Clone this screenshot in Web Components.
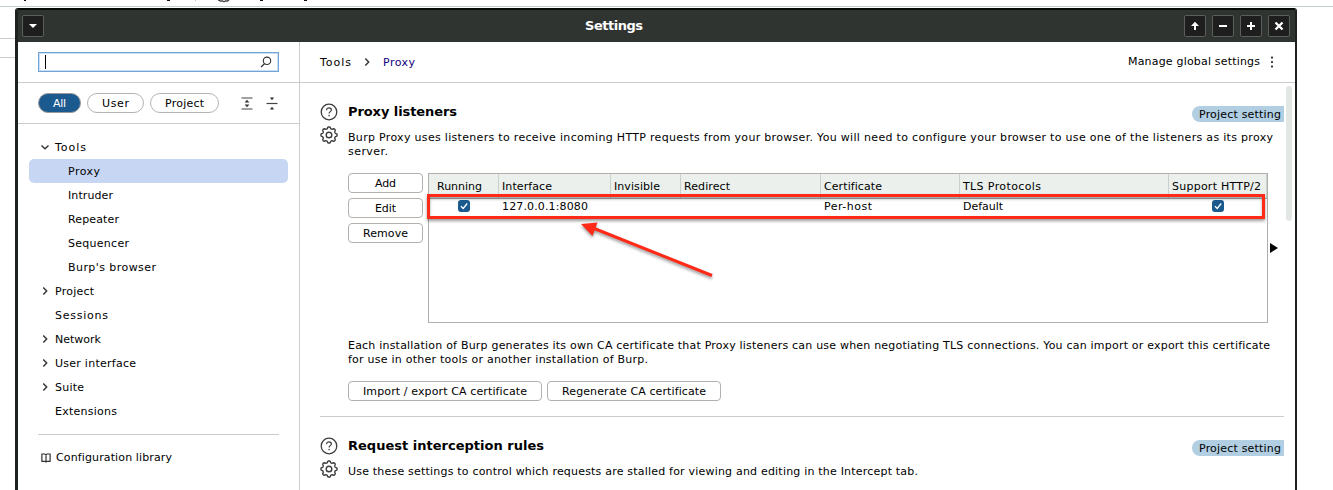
<!DOCTYPE html>
<html lang="en">
<head>
<meta charset="utf-8">
<title>Settings</title>
<style>
html,body{margin:0;height:490px;overflow:hidden;background:#fff}
body{font:11px/14px "DejaVu Sans",sans-serif;color:#000}
</style>
</head>
<body>
<burp-desktop></burp-desktop>
<script>
const define=(name,html,init)=>{
  const t=document.createElement('template');t.innerHTML=html;
  customElements.define(name,class extends HTMLElement{
    constructor(){super();this.attachShadow({mode:'open'}).appendChild(t.content.cloneNode(true));}
    connectedCallback(){if(init)init.call(this,this.shadowRoot);}
  });
};

/* One line of text spread over a fixed advance width. */
define('ui-text','<style>:host{display:block;white-space:nowrap;flex:none;height:14px}span{display:inline-block;font-variant-ligatures:none}</style><span><slot></slot></span>',function(r){
  const w=parseFloat(this.getAttribute('w'));
  const s=r.querySelector('span');
  const n=this.textContent.length;
  this.style.width=w+'px';
  s.style.letterSpacing=((w-s.getBoundingClientRect().width)/(n-1))+'px';
});

/* Outline of an eight-lobed cog. */
const cog=Array.from({length:96},(_,i)=>{
  const a=i*Math.PI/48,k=7.25+.85*Math.tanh(2*Math.cos(8*a));
  return (9+k*Math.cos(a)).toFixed(2)+' '+(9+k*Math.sin(a)).toFixed(2);
}).join('L');

const icons={
  down:['0 0 10 10','<path d="M1.5 3.5 5 6.8 8.5 3.5" fill="none" stroke="#333" stroke-width="1.4"/>'],
  right:['0 0 10 10','<path d="M3.3 1.5 6.7 5 3.3 8.5" fill="none" stroke="#333" stroke-width="1.4"/>'],
  help:['0 0 18 18','<circle cx="9" cy="9" r="7.8" fill="none" stroke="#3c3f3d" stroke-width="1.3"/><path d="M6.6 7.2C6.6 5.7 7.6 4.8 9 4.8s2.4.9 2.4 2.2c0 1.6-2.3 1.7-2.3 3.4" fill="none" stroke="#3c3f3d" stroke-width="1.2"/><circle cx="9.1" cy="12.6" r=".8" fill="#3c3f3d"/>'],
  gear:['0 0 18 18',`<path d="M${cog}z" fill="none" stroke="#3c3f3d" stroke-width="1.400" stroke-linejoin="round"/><circle cx="9" cy="9" r="2.800" fill="none" stroke="#3c3f3d" stroke-width="1.400"/>`],
  search:['0 0 12 12','<circle cx="7" cy="4.8" r="3.7" fill="none" stroke="#333" stroke-width="1.1"/><path d="M4.5 7.7 1 11" stroke="#333" stroke-width="1.2"/>'],
  expand:['0 0 12 13','<path d="M.5 1h11M.5 12h11" stroke="#444" stroke-width="1.2"/><path d="M6 2.8 8.4 5.6H3.6zM6 10.2 3.6 7.4h4.8z" fill="#333"/>'],
  collapse:['0 0 12 13','<path d="M.5 6.5h11" stroke="#444" stroke-width="1.2"/><path d="M6 3.2 3.8.6h4.4zM6 9.8l2.2 2.6H3.8z" fill="#333"/>'],
  book:['0 0 10 10','<path d="M.9 1h2.900L5 1.700 6.200 1h2.900v7.300H6L5 9 4 8.300H.9zM5 1.700V9" fill="none" stroke="#333" stroke-width="1.2"/>'],
  dots:['0 0 4 12','<rect x="1" y=".5" width="2" height="2" rx=".6" fill="#333"/><rect x="1" y="5" width="2" height="2" rx=".6" fill="#333"/><rect x="1" y="9.500" width="2" height="2" rx=".6" fill="#333"/>'],
  menu:['0 0 10 10','<path d="M1 3h8L5 7z" fill="#fff"/>'],
  up:['0 0 10 10','<path d="M5 .8 9 5H6v4H4V5H1z" fill="#fff"/>'],
  minus:['0 0 10 10','<path d="M1 4h8v2H1z" fill="#fff"/>'],
  plus:['0 0 10 10','<path d="M4 1h2v3h3v2H6v3H4V6H1V4h3z" fill="#fff"/>'],
  close:['0 0 10 10','<path d="M1.500 1.500l7 7M8.500 1.500l-7 7" stroke="#fff" stroke-width="2.300"/>'],
  play:['0 0 8 10','<path d="M0 0 8 5 0 10z"/>']
};
define('ui-icon','<style>:host{display:block;flex:none}svg{display:block;overflow:visible}</style><div></div>',function(r){
  const v=icons[this.getAttribute('name')][0],p=icons[this.getAttribute('name')][1];
  const b=v.split(' ');
  r.querySelector('div').innerHTML=`<svg width="${b[2]}" height="${b[3]}" viewBox="${v}">${p}</svg>`;
});
define('window-button','<style>:host{display:flex;box-sizing:border-box;width:22px;height:22px;border:1px solid #5c5e5d;border-radius:2px;background:#1d1e1d;align-items:center;justify-content:center}</style><slot></slot>');
define('ui-button','<style>:host{box-sizing:border-box;height:20px;padding-top:2px;display:flex;justify-content:center;align-items:center;border:1px solid #b5b0ab;border-radius:4px;background:#fff}</style><slot></slot>');
define('filter-pill','<style>:host{box-sizing:border-box;height:20px;padding-top:2px;display:flex;justify-content:center;align-items:center;border:1px solid #b3b3b3;border-radius:10px}:host([active]){background:#1b5a8f;color:#fff;border-color:#9a9a9a}</style><slot></slot>');
define('check-box','<style>:host{display:block;width:12px;height:12px;border-radius:3px;background:#1b5a8f}svg{display:block}</style><svg width="12" height="12"><path d="M3 6.300 5.200 8.500 9.200 3.500" stroke="#fff" stroke-width="1.300" fill="none"/></svg>');
define('scope-badge','<style>:host{display:flex;box-sizing:border-box;width:92px;height:16px;padding:2px 0 0 7px;background:#b1cee2;border-radius:8px 0 0 8px}</style><ui-text w="82">Project setting</ui-text>');
define('tree-item',`<style>:host{display:flex;height:24px;align-items:center;margin:0 11px;border-radius:5px;box-sizing:border-box;padding:2px 0 0 11px}
:host([active]){background:#c7d7f3}.i{width:15px;margin-top:-2px}:host([child]) .i{width:28px}</style><div class="i"></div><slot></slot>`,function(r){
  const n=this.getAttribute('icon');if(n)r.querySelector('.i').innerHTML=`<ui-icon name="${n}"></ui-icon>`;
});
define('title-bar',`<style>:host{display:flex;height:32px;background:#303431;color:#fff;align-items:center;padding:0 5px 0 4px;justify-content:space-between;font:bold 13px/14px "DejaVu Sans",sans-serif}
.r{display:flex;gap:6px}</style>
<window-button><ui-icon name="menu"></ui-icon></window-button><ui-text w="58">Settings</ui-text>
<div class="r"><window-button><ui-icon name="up"></ui-icon></window-button><window-button><ui-icon name="minus"></ui-icon></window-button><window-button><ui-icon name="plus"></ui-icon></window-button><window-button><ui-icon name="close"></ui-icon></window-button></div>`);
define('settings-sidebar',`<style>:host{display:block;width:281px;border-right:1px solid #ccc;flex:none}
.s{border-bottom:1px solid #ccc;padding:10px 20px 0;box-sizing:border-box;height:41px}
.box{box-sizing:border-box;height:20px;width:241px;border:1px solid #71a3d9;box-shadow:inset 0 0 0 1px #c9dff5;display:flex;align-items:center;justify-content:space-between;padding:0 6px}
.c{width:1px;height:14px;background:#000}
.f{box-sizing:border-box;height:41px;border-bottom:1px solid #ccc;display:flex;padding:10px 0 0 20px;gap:6px}
.ic{display:flex;gap:13px;padding:4px 0 0 16px}
.tree{padding-top:11px;height:299px;box-sizing:border-box}
.cfg{margin:11px 20px 0;border-top:1px solid #ccc;padding:16px 0 0 3px;display:flex;gap:5px;align-items:center}</style>
<div class="s"><div class="box"><div class="c"></div><ui-icon name="search"></ui-icon></div></div>
<div class="f"><filter-pill active style="width:43px"><ui-text w="13">All</ui-text></filter-pill><filter-pill style="width:57px"><ui-text w="27">User</ui-text></filter-pill><filter-pill style="width:69px"><ui-text w="39">Project</ui-text></filter-pill><div class="ic"><ui-icon name="expand"></ui-icon><ui-icon name="collapse"></ui-icon></div></div>
<div class="tree">
<tree-item icon="down"><ui-text w="31">Tools</ui-text></tree-item>
<tree-item child active><ui-text w="32">Proxy</ui-text></tree-item>
<tree-item child><ui-text w="45">Intruder</ui-text></tree-item>
<tree-item child><ui-text w="51">Repeater</ui-text></tree-item>
<tree-item child><ui-text w="61">Sequencer</ui-text></tree-item>
<tree-item child><ui-text w="88">Burp's browser</ui-text></tree-item>
<tree-item icon="right"><ui-text w="39">Project</ui-text></tree-item>
<tree-item><ui-text w="53">Sessions</ui-text></tree-item>
<tree-item icon="right"><ui-text w="46">Network</ui-text></tree-item>
<tree-item icon="right"><ui-text w="81">User interface</ui-text></tree-item>
<tree-item icon="right"><ui-text w="29">Suite</ui-text></tree-item>
<tree-item><ui-text w="62">Extensions</ui-text></tree-item>
</div>
<div class="cfg"><ui-icon name="book"></ui-icon><ui-text w="116">Configuration library</ui-text></div>`);
define('section-head',`<style>:host{display:grid;grid-template-columns:28px minmax(0,1fr) 92px;height:48px}
.ic{display:flex;flex-direction:column;gap:5px}.h{font:bold 13px/14px "DejaVu Sans",sans-serif;padding-top:2px}
.p{padding-top:12px;font:11px/14px "DejaVu Sans",sans-serif}scope-badge{margin-top:3px}</style>
<div class="ic"><ui-icon name="help"></ui-icon><ui-icon name="gear"></ui-icon></div><div class="h"><slot name="title"></slot><div class="p"><slot></slot></div></div><scope-badge></scope-badge>`);
define('listener-table',`<style>:host{display:block;position:relative;box-sizing:border-box;width:840px;height:150px;border:1px solid #b1aeab}
.g{display:grid;grid-template-columns:70px 112px 70px 140px 139px 209px 98px}
.h{height:24px;background:#ebf0ec;border-bottom:1px solid #b1aeab}
.h>*{box-sizing:border-box;border-right:1px solid #ccd0cd;padding:6px 0 0 3px;height:24px}
.h>:first-child{padding-left:8px}.row{height:16px}.row>*{padding:1px 0 0 3px}.row>.c{padding:1px 0 0 29px}.row>.c2{padding-left:43px}
.mark{position:absolute;left:-2px;top:20px;width:832px;height:19px;border:3px solid #ff2a17;box-shadow:0 2px 3px #0006,inset 0 2px 3px #0005}
.arrow{position:absolute;left:152px;top:46px}</style>
<div class="g h"><div><ui-text w="45">Running</ui-text></div><div><ui-text w="50">Interface</ui-text></div><div><ui-text w="46">Invisible</ui-text></div><div><ui-text w="46">Redirect</ui-text></div><div><ui-text w="58">Certificate</ui-text></div><div><ui-text w="78">TLS Protocols</ui-text></div><div><ui-text w="89">Support HTTP/2</ui-text></div></div>
<div class="g row"><div class="c"><check-box></check-box></div><div><ui-text w="86">127.0.0.1:8080</ui-text></div><div></div><div></div><div><ui-text w="48">Per-host</ui-text></div><div><ui-text w="40">Default</ui-text></div><div class="c c2"><check-box></check-box></div></div>
<div class="mark"></div>
<svg class="arrow" width="140" height="64" style="filter:drop-shadow(0 2px 1.500px #0006)"><path d="M12 8 131 55.500" stroke="#ff2a17" stroke-width="3"/><path d="M0 4 16.500 2.500 11.500 16z" fill="#ff2a17"/></svg>`);
define('settings-content',`<style>:host{display:block;flex:1;min-width:0}
.top{box-sizing:border-box;height:41px;border-bottom:1px solid #ccc;display:flex;align-items:center;padding:0 21px 0 20px}
.top .b{margin-top:1px}.top ui-icon{margin:0 11px}.m{margin-left:auto}.top .d{margin:0 0 0 10px}
.body{display:flex;justify-content:space-between}.main{box-sizing:border-box;width:984px;padding:20px 0 0 20px}
.bar{width:6px;height:135px;background:#e2e7e3;border-radius:3px;margin:3px 3px 0 0}
.row{display:flex;padding:22px 0 0 28px;align-items:flex-start}.col{display:flex;flex-direction:column;gap:5px;width:75px;margin-right:5px;flex:none}
listener-table{flex:none}.play{margin:70px -8px 0 2px}.note{padding:16px 0 0 28px}.btns{display:flex;gap:5px;padding:14px 0 0 28px}
.rule{height:1px;background:#ccc;margin:15px 0 20px}</style>
<div class="top"><ui-text class="b" w="31">Tools</ui-text><ui-icon name="right"></ui-icon><ui-text class="b" w="32" style="color:#10007c">Proxy</ui-text><ui-text class="m" w="132">Manage global settings</ui-text><ui-icon class="d" name="dots"></ui-icon></div>
<div class="body"><div class="main">
<section-head><ui-text slot="title" w="109">Proxy listeners</ui-text><ui-text w="925">Burp Proxy uses listeners to receive incoming HTTP requests from your browser. You will need to configure your browser to use one of the listeners as its proxy</ui-text><ui-text w="40">server.</ui-text></section-head>
<div class="row"><div class="col"><ui-button><ui-text w="21">Add</ui-text></ui-button><ui-button><ui-text w="21">Edit</ui-text></ui-button><ui-button><ui-text w="45">Remove</ui-text></ui-button></div><listener-table></listener-table><ui-icon class="play" name="play"></ui-icon></div>
<div class="note"><ui-text w="922">Each installation of Burp generates its own CA certificate that Proxy listeners can use when negotiating TLS connections. You can import or export this certificate</ui-text><ui-text w="300">for use in other tools or another installation of Burp.</ui-text></div>
<div class="btns"><ui-button style="width:194px"><ui-text w="164">Import / export CA certificate</ui-text></ui-button><ui-button style="width:174px"><ui-text w="144">Regenerate CA certificate</ui-text></ui-button></div>
<div class="rule"></div>
<section-head><ui-text slot="title" w="196">Request interception rules</ui-text><ui-text w="570">Use these settings to control which requests are stalled for viewing and editing in the Intercept tab.</ui-text></section-head>
</div><div class="bar"></div></div>`);
define('settings-window',`<style>:host{display:block;box-sizing:border-box;width:1282px;height:490px;border:solid #1d211f;border-width:2px 2px 0 3px;border-top-color:#080a09;border-radius:3px 3px 0 0;background:#fff}
.b{display:flex;height:460px}</style><title-bar></title-bar><div class="b"><settings-sidebar></settings-sidebar><settings-content></settings-content></div>`);
define('burp-desktop',`<style>:host{display:block;height:490px;overflow:hidden}.strip{height:8px}svg{display:block}
.w{display:grid;grid-template-columns:15px 1282px 1fr}.l{height:30px;border-bottom:1px solid #ccc}.l+.l{height:18px}</style>
<div class="strip"><svg width="1333" height="8"><path d="M0 6.500h1333" stroke="#c3d1cd"/><path d="M24 0h2M167 0h3M260 0h3M304 0h3" stroke="#111" stroke-width="2"/><path d="M195.500 0v1" stroke="#bbb"/><path d="M218 0l2.500 1 2-.2 1.500 1 1.500-1 2 .2L229 0" stroke="#444" stroke-width="1.300" fill="none"/></svg></div>
<div class="w"><div><div class="l"></div><div class="l"></div></div><settings-window></settings-window></div>`);
</script>
</body>
</html>
